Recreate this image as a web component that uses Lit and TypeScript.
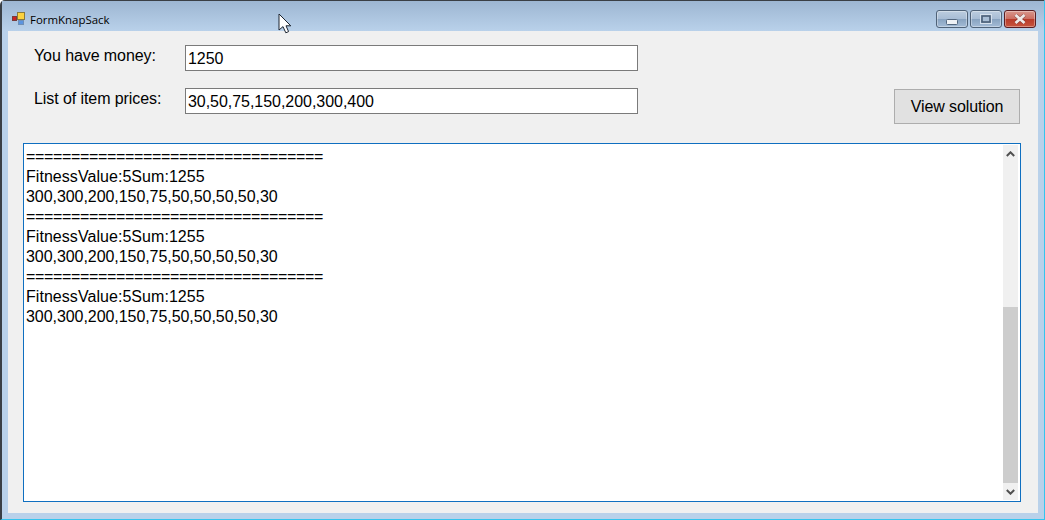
import { LitElement, html, css } from "lit";
import { customElement } from "lit/decorators.js";

const SEP = "=================================";
const FIT = "FitnessValue:5Sum:1255";
const VAL = "300,300,200,150,75,50,50,50,50,30";

@customElement("app-root")
export class AppRoot extends LitElement {
  static styles = css`
    :host { display: block; width: 1045px; height: 520px; font-family: "Liberation Sans", Arial, sans-serif; font-size: 16px; color: #000; overflow: hidden; }
    * { box-sizing: border-box; }
    .window { position: relative; width: 1045px; height: 520px; display: flex; flex-direction: column; background: #b9d1ea; border-top: 1px solid #3a3f45; border-left: 2px solid #3a3f45; border-right: 1px solid #35c4ee; border-bottom: 1px solid #35c4ee; border-top-left-radius: 5px; }
    .title { height: 30px; flex: none; display: flex; align-items: flex-start; padding-left: 10px; background: linear-gradient(#9db6d2, #b9d1ea); }
    .appicon { margin-top: 11px; flex: none; }
    .caption { margin: 0 0 0 5px; padding-top: 11px; font-family: "Open Sans", sans-serif; font-size: 11.45px; line-height: 15px; color: #000; }
    .ctrls { margin-left: auto; margin-right: 8px; margin-top: 9px; display: flex; gap: 2px; }
    .cb { width: 32px; height: 18px; border: 1px solid #4f6278; border-radius: 3px; display: flex; align-items: center; justify-content: center; background: linear-gradient(#bccddf 0, #a8bdd5 48%, #88a3c0 52%, #a3bbd6 100%); box-shadow: inset 0 0 0 1px rgba(255,255,255,.35); }
    .cb.close { border-color: #5a1d22; background: linear-gradient(#d8968c 0, #cc6e62 48%, #b93b2a 52%, #c7553f 100%); }
    .cb .min { margin-top: 5px; }
    .client { flex: 1; margin: 0 6px 6px 6px; background: #f0f0f0; display: flex; flex-direction: column; min-height: 0; }
    .top { height: 112px; flex: none; display: flex; padding: 14px 18px 0 26px; }
    .form { display: flex; flex-direction: column; gap: 17px; }
    .row { display: flex; align-items: center; }
    .row label { width: 151px; padding-bottom: 4px; line-height: 20px; letter-spacing: -0.08px; }
    .row input { width: 453px; height: 26px; border: 1px solid #7a7a7a; padding: 2px 2px 0; margin: 0; background: #fff; font: inherit; color: #000; outline: none; border-radius: 0; letter-spacing: -0.04px; }
    .view { margin-left: auto; margin-top: 44px; width: 126px; height: 35px; background: #e1e1e1; border: 1px solid #adadad; font: inherit; letter-spacing: -0.1px; color: #000; padding: 0; border-radius: 0; }
    .output { flex: 1; min-height: 0; margin: 0 17px 11px 15px; border: 1px solid #0f6fc0; background: #fff; display: flex; padding: 1px 2px 1px 0; }
    .log { flex: 1; padding: 2px 0 0 2px; line-height: 20px; white-space: pre; overflow: hidden; }
    .eq { letter-spacing: -0.34px; }
    .fit { letter-spacing: 0.05px; }
    .val { letter-spacing: -0.06px; }
    .sb { width: 15px; flex: none; background: #f0f0f0; display: flex; flex-direction: column; align-items: center; justify-content: space-between; }
    .arrow { height: 17px; display: flex; align-items: center; justify-content: center; flex: none; }
    .track { flex: 1; width: 100%; display: flex; flex-direction: column; justify-content: flex-end; }
    .thumb { height: 176px; background: #cdcdcd; }
    .cursor { position: absolute; left: 276px; top: 12px; }
  `;

  private block() {
    return html`<div class="eq">${SEP}</div><div class="fit">${FIT}</div><div class="val">${VAL}</div>`;
  }

  render() {
    return html`
      <div class="window">
        <div class="title">
          <svg class="appicon" width="13" height="13" viewBox="0 0 13 13">
            <rect x="0.5" y="4.5" width="4" height="4" fill="#c22" stroke="#7a3b3b"/>
            <rect x="5.5" y="0.5" width="7" height="7" fill="#fbd23f" stroke="#8a7a3a"/>
            <rect x="6.5" y="8.5" width="5" height="4" fill="#5b94e0" stroke="#6f8fb5"/>
          </svg>
          <p class="caption">FormKnapSack</p>
          <div class="ctrls">
            <div class="cb"><svg class="min" width="12" height="6" viewBox="0 0 12 6"><rect x="0.5" y="0.5" width="11" height="5" rx="1" fill="#eef1f5" stroke="#53677f"/></svg></div>
            <div class="cb"><svg width="12" height="10" viewBox="0 0 12 10"><rect x="0.5" y="0.5" width="11" height="9" fill="none" stroke="#d5e0ec"/><rect x="2" y="2" width="8" height="6" fill="#a9bed5" stroke="#4a5e76" stroke-width="1.6"/></svg></div>
            <div class="cb close"><svg width="14" height="10" viewBox="0 0 14 10"><path d="M2.5 1 L11.5 9 M11.5 1 L2.5 9" stroke="#59262a" stroke-width="3.8" fill="none" opacity="0.55"/><path d="M2.5 1 L11.5 9 M11.5 1 L2.5 9" stroke="#eee9e8" stroke-width="2.8" fill="none"/></svg></div>
          </div>
        </div>
        <div class="client">
          <div class="top">
            <div class="form">
              <div class="row"><label>You have money:</label><input .value=${"1250"} /></div>
              <div class="row"><label>List of item prices:</label><input .value=${"30,50,75,150,200,300,400"} /></div>
            </div>
            <button class="view">View solution</button>
          </div>
          <div class="output">
            <div class="log">${this.block()}${this.block()}${this.block()}</div>
            <div class="sb">
              <div class="arrow"><svg width="9" height="6" viewBox="0 0 9 6"><path d="M0.8 5 L4.5 1.3 L8.2 5" stroke="#505050" stroke-width="2" fill="none"/></svg></div>
              <div class="track"><div class="thumb"></div></div>
              <div class="arrow"><svg width="9" height="6" viewBox="0 0 9 6"><path d="M0.8 1 L4.5 4.7 L8.2 1" stroke="#505050" stroke-width="2" fill="none"/></svg></div>
            </div>
          </div>
        </div>
        <svg class="cursor" width="16" height="22" viewBox="0 0 16 22"><path d="M1 1 L1 17 L5 13.6 L7.8 19.8 L10.6 18.6 L8 12.8 L12.8 12.8 Z" fill="#fff" stroke="#1c2430" stroke-width="1"/></svg>
      </div>
    `;
  }
}
